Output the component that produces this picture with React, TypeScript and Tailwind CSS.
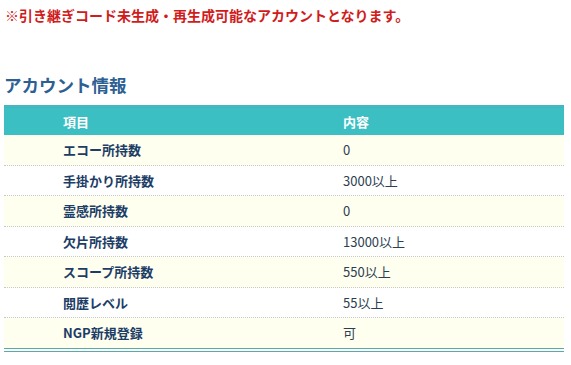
import React from 'react';

const rows: [string, string][] = [
  ['エコー所持数', '0'],
  ['手掛かり所持数', '3000以上'],
  ['霊感所持数', '0'],
  ['欠片所持数', '13000以上'],
  ['スコープ所持数', '550以上'],
  ['閲歴レベル', '55以上'],
  ['NGP新規登録', '可'],
];

const App: React.FC = () => {
  return (
    <div
      className="w-[571px] h-[365px] bg-white overflow-hidden"
      style={{ fontFamily: '"Noto Sans CJK JP", "Noto Sans", sans-serif' }}
    >
      <p className="pl-[5px] pt-[5px] h-[20px] text-[14px] leading-[20px] font-bold text-[#d01c1c]">
        ※引き継ぎコード未生成・再生成可能なアカウントとなります。
      </p>

      <h2 className="pl-[4px] mt-[53px] h-[24px] text-[17.5px] leading-[24px] font-bold text-[#2d5f93]">
        アカウント情報
      </h2>

      <div className="ml-[4px] mt-[8px] w-[560px]">
        <div className="flex h-[30px] border-t-[3px] border-double border-[#47b3c0] bg-[#3cbfc3] text-white text-[13px] font-bold">
          <div className="w-[280px] pl-[59px] flex items-center">項目</div>
          <div className="flex-1 pl-[59px] flex items-center">内容</div>
        </div>
        {rows.map(([label, value], i) => (
          <div
            key={label}
            className={`flex text-[13px] ${
              i % 2 === 0 ? 'bg-[#fffff0]' : 'bg-white'
            } ${
              i === rows.length - 1
                ? 'h-[34px] border-b-[4px] border-double border-[#5aa7b8]'
                : 'h-[30.5px] border-b border-dotted border-[#c8c8c8]'
            }`}
          >
            <div className="w-[280px] pl-[59px] flex items-center font-bold text-[#1c3d66]">{label}</div>
            <div className="flex-1 pl-[59px] flex items-center text-[#2c3e50]">{value}</div>
          </div>
        ))}
      </div>
    </div>
  );
};

export default App;
